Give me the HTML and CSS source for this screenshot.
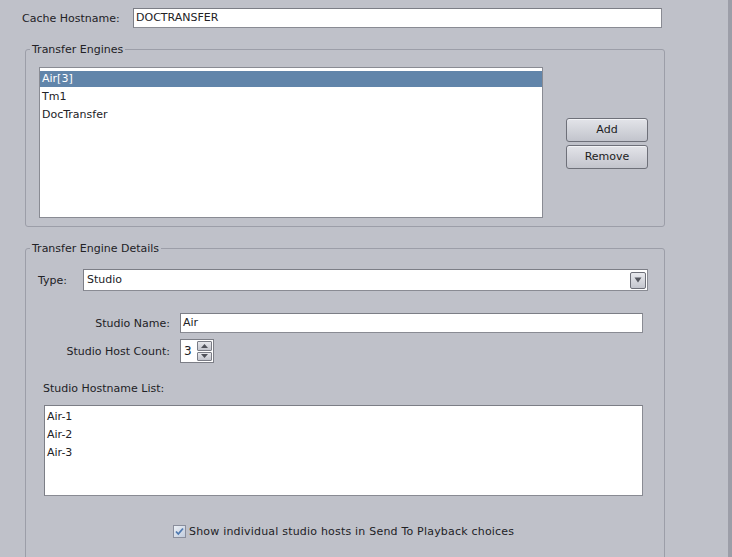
FILE: index.html
```html
<!DOCTYPE html>
<html>
<head>
<meta charset="utf-8">
<link rel="stylesheet" href="styles.css">
</head>
<body>
<div class="window">
  <div class="main">
    <div class="host-row">
      <span class="host-label">Cache Hostname:</span>
      <div class="field host-field">DOCTRANSFER</div>
    </div>

    <fieldset class="group">
      <legend>Transfer Engines</legend>
      <div class="engines-body">
        <div class="listbox">
          <div class="item selected">Air[3]</div>
          <div class="item">Tm1</div>
          <div class="item">DocTransfer</div>
        </div>
        <div class="buttons">
          <div class="btn">Add</div>
          <div class="btn">Remove</div>
        </div>
      </div>
    </fieldset>

    <fieldset class="group details">
      <legend>Transfer Engine Details</legend>
      <div class="details-body">
        <div class="type-row">
          <span class="type-label">Type:</span>
          <div class="field combo">
            <span>Studio</span>
            <span class="drop-btn">
              <svg width="8" height="6" viewBox="0 0 8 6"><path d="M0.5 0.5 L7.5 0.5 L4 5.5 Z" fill="#55575f"/></svg>
            </span>
          </div>
        </div>

        <div class="form-row name-row">
          <span class="row-label">Studio Name:</span>
          <div class="field name-field">Air</div>
        </div>

        <div class="form-row count-row">
          <span class="row-label">Studio Host Count:</span>
          <div class="spinner">
            <span class="spin-value">3</span>
            <span class="spin-btns">
              <span class="spin-btn"><svg width="7" height="4" viewBox="0 0 7 4"><path d="M0 4 L7 4 L3.5 0 Z" fill="#50525a"/></svg></span>
              <span class="spin-btn"><svg width="7" height="4" viewBox="0 0 7 4"><path d="M0 0 L7 0 L3.5 4 Z" fill="#50525a"/></svg></span>
            </span>
          </div>
        </div>

        <div class="list-label">Studio Hostname List:</div>
        <div class="field hostlist">
          <div class="host-item">Air-1</div>
          <div class="host-item">Air-2</div>
          <div class="host-item">Air-3</div>
        </div>

        <div class="check-row">
          <svg class="checkbox" width="13" height="13" viewBox="0 0 13 13">
            <defs>
              <linearGradient id="cbg" x1="0" y1="0" x2="1" y2="1">
                <stop offset="0" stop-color="#eef2f7"/>
                <stop offset="1" stop-color="#bfcadb"/>
              </linearGradient>
            </defs>
            <rect x="0.5" y="0.5" width="12" height="12" fill="url(#cbg)" stroke="#8a8e9c"/>
            <path d="M3 6.5 L5.3 9 L10 3.5" fill="none" stroke="#4f79b0" stroke-width="1.8"/>
          </svg>
          <span class="check-text">Show individual studio hosts in Send To Playback choices</span>
        </div>
      </div>
    </fieldset>
  </div>
  <div class="side"></div>
</div>
</body>
</html>
```

FILE: styles.css
```css
* {
  box-sizing: border-box;
}

html, body {
  margin: 0;
  height: 557px;
  overflow: hidden;
}

body {
  background: #bfc1c9;
  font-family: "DejaVu Sans", sans-serif;
  font-size: 11px;
  color: #222226;
}

.window {
  display: flex;
  height: 557px;
  overflow: hidden;
}

.main {
  width: 665px;
  flex: none;
}

.side {
  flex: 1;
  border-right: 4px solid #9c9ea8;
}

.field {
  background: #ffffff;
  border: 1px solid #898b93;
  border-top-color: #7c7e86;
  border-left-color: #7c7e86;
  padding-left: 2px;
  line-height: 18px;
  white-space: nowrap;
}

/* cache hostname */
.host-row {
  display: flex;
  align-items: center;
  margin-top: 8px;
  height: 20px;
}

.host-label {
  width: 133px;
  padding-left: 22px;
}

.host-field {
  width: 529px;
  height: 20px;
}

/* group boxes */
.group {
  margin: 15px 0 0 25px;
  width: 640px;
  border: 1px solid #9c9ea8;
  border-radius: 3px;
  padding: 0;
  min-width: 0;
}

.group legend {
  margin-left: 4px;
  padding: 0 2px;
  line-height: 13px;
}

.details {
  height: 340px;
}

.engines-body {
  display: flex;
  align-items: flex-start;
  padding: 11px 0 8px 13px;
}

.listbox {
  width: 504px;
  height: 151px;
  background: #ffffff;
  border: 1px solid #898b93;
  padding-top: 2px;
}

.item {
  height: 18px;
  line-height: 18px;
  padding-left: 2px;
  white-space: nowrap;
}

.item.selected {
  border-top: 1px solid transparent;
  border-bottom: 1px solid transparent;
  line-height: 16px;
  background: #6185aa;
  background-clip: padding-box;
  color: #ffffff;
}

.buttons {
  display: flex;
  flex-direction: column;
  gap: 3px;
  margin: 51px 0 0 23px;
}

.btn {
  width: 82px;
  height: 24px;
  border: 1px solid #6e7079;
  border-radius: 3px;
  background: linear-gradient(#e3e4e9, #c2c4cc);
  box-shadow: inset 0 1px 0 #f2f3f6;
  text-align: center;
  line-height: 22px;
  color: #1c1c1c;
}

/* details */
.details-body {
  padding: 14px 15px 0 12px;
}

.type-row {
  display: flex;
  align-items: center;
  height: 22px;
}

.type-label {
  width: 45px;
}

.combo {
  width: 565px;
  height: 22px;
  display: flex;
  align-items: center;
  justify-content: space-between;
  padding-left: 3px;
  padding-right: 1px;
  line-height: 20px;
}

.drop-btn {
  width: 16px;
  height: 17px;
  border: 1px solid #6e7079;
  border-radius: 2px;
  background: linear-gradient(#e8e9ed, #c4c6ce);
  display: flex;
  align-items: center;
  justify-content: center;
}

.drop-btn svg {
  display: block;
}

.form-row {
  display: flex;
  align-items: center;
}

.row-label {
  width: 132px;
  margin-right: 10px;
  text-align: right;
}

.name-row {
  margin-top: 22px;
  height: 20px;
}

.name-field {
  width: 463px;
  height: 20px;
}

.count-row {
  margin-top: 6px;
  height: 24px;
}

.spinner {
  width: 34px;
  height: 24px;
  border: 1px solid #7c7e86;
  background: #ffffff;
  display: flex;
  align-items: stretch;
}

.spin-value {
  width: 16px;
  padding-left: 3px;
  line-height: 22px;
  font-size: 12px;
}

.spin-btns {
  display: flex;
  flex-direction: column;
  gap: 1px;
  padding: 1px 1px 1px 0;
  width: 16px;
}

.spin-btn {
  flex: 1;
  border: 1px solid #7a7c85;
  border-radius: 1px;
  background: linear-gradient(#e6e7eb, #c3c5cd);
  display: flex;
  align-items: center;
  justify-content: center;
}

.spin-btn svg {
  display: block;
}

.list-label {
  margin-top: 19px;
  padding-left: 5px;
  line-height: 13px;
}

.hostlist {
  margin: 10px 0 0 6px;
  width: 599px;
  height: 91px;
  padding: 2px 0 0 2px;
}

.host-item {
  height: 18px;
  line-height: 18px;
}

.check-row {
  display: flex;
  align-items: center;
  margin-top: 29px;
  padding-left: 135px;
  gap: 3px;
}

.checkbox {
  display: block;
  flex: none;
}

.check-text {
  letter-spacing: 0.2px;
}
```
